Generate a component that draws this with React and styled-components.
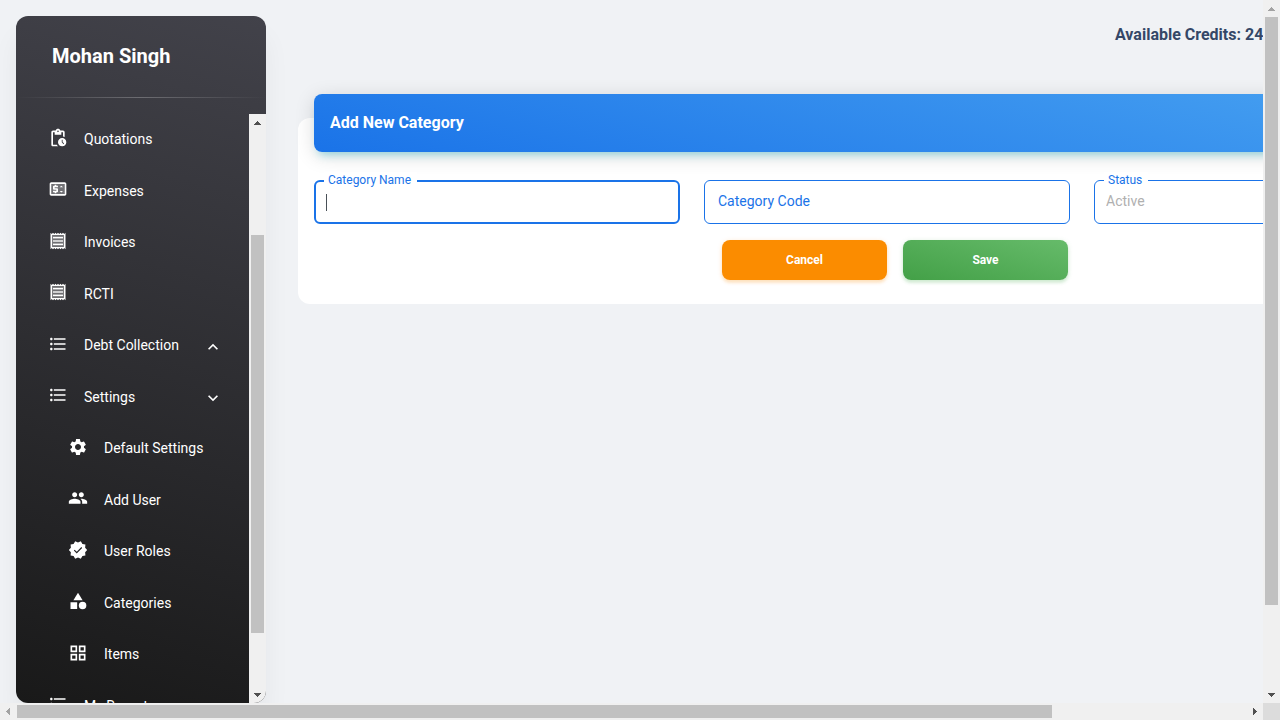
import React from 'react';
import styled, { createGlobalStyle, css } from 'styled-components';
import {
  MdPendingActions, MdOutlinePriceChange, MdFormatListBulleted, MdExpandLess, MdExpandMore,
  MdSettings, MdPeople, MdCategory, MdGridView,
} from 'react-icons/md';

const Global = createGlobalStyle`
  *, *::before, *::after { box-sizing: border-box; }
  body { margin: 0; background: #f0f2f5; color: #344767; font-family: Roboto, "Liberation Sans", sans-serif; font-size: 14px; }
  ul { list-style: none; margin: 0; padding: 0; }
  h1, h2, p { margin: 0; }
`;

/* window frame: page area plus its two scroll bars */
const Frame = styled.div`
  display: grid;
  grid-template-columns: minmax(0, 1fr) 17px;
  grid-template-rows: minmax(0, 1fr) 17px;
  height: 100vh;
`;
const Viewport = styled.div`
  display: flex;
  align-items: flex-start;
  overflow: hidden;
`;
const Corner = styled.div`
  background: #dcdcdc;
`;

const Track = styled.div`
  display: flex;
  flex: none;
  flex-direction: ${(p) => (p.$horizontal ? 'row' : 'column')};
  background: #f0f0f0;
  ${(p) => (p.$horizontal ? css`height: 17px;` : css`width: 17px;`)}
`;
const Arrow = styled.svg`
  display: block;
  flex: none;
  width: 17px;
  height: 17px;
  fill: ${(p) => (p.$muted ? '#a3a3a3' : '#505050')};
`;
const Space = styled.div`
  flex: ${(p) => p.$share} 1 0;
`;
const Thumb = styled.div`
  flex: ${(p) => p.$share} 1 0;
  margin: ${(p) => (p.$horizontal ? '2px 0' : '0 2px')};
  background: #c1c1c1;
`;

const arrows = {
  up: 'M5 11h7v-1h-1v-1h-1v-1h-1v-1h-1v1h-1v1h-1v1h-1z',
  down: 'M5 7h7v1h-1v1h-1v1h-1v1h-1v-1h-1v-1h-1v-1h-1z',
  left: 'M10 5v7h-1v-1h-1v-1h-1v-1h-1v-1h1v-1h1v-1h1v-1z',
  right: 'M7 5v7h1v-1h1v-1h1v-1h1v-1h-1v-1h-1v-1h-1v-1z',
};

function ScrollBar({ horizontal, before, thumb, after }) {
  return (
    <Track $horizontal={horizontal} aria-hidden="true">
      <Arrow viewBox="0 0 17 17" $muted={before === 0}><path d={horizontal ? arrows.left : arrows.up} /></Arrow>
      <Space $share={before} />
      <Thumb $horizontal={horizontal} $share={thumb} />
      <Space $share={after} />
      <Arrow viewBox="0 0 17 17"><path d={horizontal ? arrows.right : arrows.down} /></Arrow>
    </Track>
  );
}

/* side navigation */
const Sidebar = styled.aside`
  display: flex;
  flex: none;
  flex-direction: column;
  width: 250px;
  height: calc(100vh - 33px);
  margin: 16px 0 16px 16px;
  overflow: hidden;
  border-radius: 12px;
  background: linear-gradient(195deg, #42424a, #191919);
  box-shadow: 0 20px 27px 0 rgba(0, 0, 0, 0.05);
  color: #fff;
`;
const Owner = styled.h1`
  padding: 28px 36px;
  font-size: 20px;
  font-weight: 700;
  line-height: 25px;
`;
const Divider = styled.hr`
  flex: none;
  width: 100%;
  height: 1px;
  margin: 0 0 16px;
  border: 0;
  opacity: 0.25;
  background: linear-gradient(to right, rgba(255, 255, 255, 0), #fff, rgba(255, 255, 255, 0));
`;
const NavBody = styled.div`
  display: flex;
  flex: 1;
  min-height: 0;
`;
const Nav = styled.nav`
  flex: 1;
  overflow: hidden;
`;
const NavLink = styled.a`
  display: flex;
  align-items: center;
  padding: 17px 26px 17px ${(p) => (p.$nested ? '52px' : '32px')};
  color: #fff;
  font-size: 14px;
  line-height: 1.25;
  text-decoration: none;
`;
const IconBox = styled.span`
  display: flex;
  width: 20px;
  height: 16px;
  margin-right: 16px;
  svg { flex: none; margin-top: -4px; }
`;
const EndBox = styled.span`
  display: flex;
  align-items: center;
  height: 16px;
  svg { flex: none; margin-top: 2px; }
`;
const NavText = styled.span`
  flex: 1;
`;

const Receipt = () => (
  <svg width="20" height="20" viewBox="0 0 24 24" fill="currentColor">
    <path opacity=".3" d="M5 19.09h14V4.91H5v14.18zM6 7h12v2H6V7zm0 4h12v2H6v-2zm0 4h12v2H6v-2z" />
    <path d="M19.500 3.500L18 2l-1.500 1.500L15 2l-1.500 1.500L12 2l-1.500 1.500L9 2 7.500 3.500 6 2 4.500 3.500 3 2v20l1.500-1.500L6 22l1.500-1.500L9 22l1.500-1.500L12 22l1.500-1.500L15 22l1.500-1.500L18 22l1.500-1.500L21 22V2l-1.500 1.500zM19 19.090H5V4.910h14v14.180zM6 15h12v2H6zm0-4h12v2H6zm0-4h12v2H6z" />
  </svg>
);
const PriceCard = () => (
  <svg width="20" height="20" viewBox="0 0 24 24" fill="currentColor">
    <path opacity=".3" d="M4 6h16v12H4z" />
    <MdOutlinePriceChange size={24} />
  </svg>
);
const VerifiedBadge = () => (
  <svg width="20" height="20" viewBox="0 0 24 24" fill="currentColor">
    <path d="M23 12l-2.440-2.790.34-3.690-3.610-.82L15.400 1.500 12 2.960 8.600 1.500 6.710 4.690 3.100 5.500l.34 3.700L1 12l2.440 2.790-.34 3.700 3.610.82L8.600 22.500l3.400-1.470 3.400 1.460 1.890-3.190 3.610-.82-.34-3.690z" />
    <path d="M7.500 12.200l3 3 6-6.200" fill="none" stroke="#242426" strokeWidth="1.500" />
  </svg>
);

const links = [
  { text: 'Quotations', Icon: MdPendingActions },
  { text: 'Expenses', Icon: PriceCard },
  { text: 'Invoices', Icon: Receipt },
  { text: 'RCTI', Icon: Receipt },
  { text: 'Debt Collection', Icon: MdFormatListBulleted, End: MdExpandLess },
  { text: 'Settings', Icon: MdFormatListBulleted, End: MdExpandMore },
  { text: 'Default Settings', Icon: MdSettings, nested: true },
  { text: 'Add User', Icon: MdPeople, nested: true },
  { text: 'User Roles', Icon: VerifiedBadge, nested: true },
  { text: 'Categories', Icon: MdCategory, nested: true },
  { text: 'Items', Icon: MdGridView, nested: true },
  { text: 'My Report', Icon: MdFormatListBulleted },
];

/* page content */
const Main = styled.main`
  flex: 1 0 auto;
  min-width: 1234px;
  padding: 16px 24px 16px 32px;
`;
const TopBar = styled.header`
  display: flex;
  justify-content: flex-end;
  height: 102px;
  padding-top: 8px;
`;
const Credits = styled.p`
  width: 361px;
  font-size: 16px;
  font-weight: 700;
  line-height: 22px;
`;
const Card = styled.section`
  padding: 0 16px 24px;
  border-radius: 12px;
  background: #fff;
`;
const Banner = styled.div`
  position: relative;
  top: -24px;
  padding: 16px;
  border-radius: 8px;
  background: linear-gradient(195deg, #49a3f1, #1a73e8);
  box-shadow: 0 4px 20px 0 rgba(0, 0, 0, 0.14), 0 7px 10px -5px rgba(0, 188, 212, 0.4);
  color: #fff;
`;
const BannerTitle = styled.h2`
  font-size: 16px;
  font-weight: 700;
  line-height: 26px;
`;
const Form = styled.form`
  padding-top: 4px;
`;
const Fields = styled.div`
  display: grid;
  grid-template-columns: repeat(3, minmax(0, 1fr));
  gap: 24px;
`;
const Field = styled.div`
  position: relative;
  height: 44px;
`;
const Label = styled.label`
  position: absolute;
  left: ${(p) => (p.$raised ? '10px' : '14px')};
  top: ${(p) => (p.$raised ? '-8px' : '11px')};
  padding: ${(p) => (p.$raised ? '0 6px 0 4px' : '0')};
  background: #fff;
  color: #1a73e8;
  font-size: ${(p) => (p.$raised ? '12px' : '14px')};
  line-height: ${(p) => (p.$raised ? '16px' : '20px')};
`;
const controlStyle = css`
  display: block;
  width: 100%;
  height: 44px;
  border: ${(p) => (p.$active ? '2px' : '1px')} solid #1a73e8;
  border-radius: 6px;
  outline: 0;
  background: #fff;
  font: 14px/20px Roboto, "Liberation Sans", sans-serif;
`;
const TextInput = styled.input`
  ${controlStyle}
  padding: 0 10px;
  color: #495057;
`;
const Select = styled.select`
  ${controlStyle}
  padding: 0 11px 2px;
  appearance: none;
  color: #b0b0b0;
  opacity: 1;
`;
const Caret = styled.span`
  position: absolute;
  left: 12px;
  top: 14px;
  width: 1px;
  height: 17px;
  background: #495057;
`;
const Actions = styled.div`
  display: flex;
  justify-content: center;
  margin-top: 16px;
`;
const Button = styled.button`
  width: 165px;
  height: 40px;
  margin-left: 16px;
  border: 0;
  border-radius: 8px;
  background: ${(p) => (p.$save ? 'linear-gradient(195deg, #66bb6a, #43a047)' : '#fb8c00')};
  box-shadow: ${(p) => (p.$save
    ? '0 3px 3px 0 rgba(76, 175, 80, 0.15), 0 1px 5px 0 rgba(76, 175, 80, 0.2)'
    : '0 3px 3px 0 rgba(251, 140, 0, 0.15), 0 1px 5px 0 rgba(251, 140, 0, 0.2)')};
  color: #fff;
  font: 700 12px/17px Roboto, "Liberation Sans", sans-serif;
`;

export default function App() {
  return (
    <>
      <Global />
      <Frame>
        <Viewport>
          <Sidebar>
            <Owner>Mohan Singh</Owner>
            <Divider />
            <NavBody>
              <Nav>
                <ul>
                  {links.map(({ text, Icon, End, nested }) => (
                    <li key={text}>
                      <NavLink href="#" $nested={nested}>
                        <IconBox><Icon size={20} /></IconBox>
                        <NavText>{text}</NavText>
                        {End && <EndBox><End size={20} /></EndBox>}
                      </NavLink>
                    </li>
                  ))}
                </ul>
              </Nav>
              <ScrollBar before={104} thumb={398} after={53} />
            </NavBody>
          </Sidebar>
          <Main>
            <TopBar>
              <Credits>Available Credits: 24</Credits>
            </TopBar>
            <Card>
              <Banner><BannerTitle>Add New Category</BannerTitle></Banner>
              <Form onSubmit={(e) => e.preventDefault()}>
                <Fields>
                  <Field>
                    <TextInput id="category-name" $active />
                    <Label htmlFor="category-name" $raised>Category Name</Label>
                    <Caret />
                  </Field>
                  <Field>
                    <TextInput id="category-code" />
                    <Label htmlFor="category-code">Category Code</Label>
                  </Field>
                  <Field>
                    <Select id="status" disabled><option>Active</option></Select>
                    <Label htmlFor="status" $raised>Status</Label>
                  </Field>
                </Fields>
                <Actions>
                  <Button type="button">Cancel</Button>
                  <Button type="submit" $save>Save</Button>
                </Actions>
              </Form>
            </Card>
          </Main>
        </Viewport>
        <ScrollBar before={0} thumb={588} after={81} />
        <ScrollBar horizontal before={0} thumb={1035} after={194} />
        <Corner />
      </Frame>
    </>
  );
}
